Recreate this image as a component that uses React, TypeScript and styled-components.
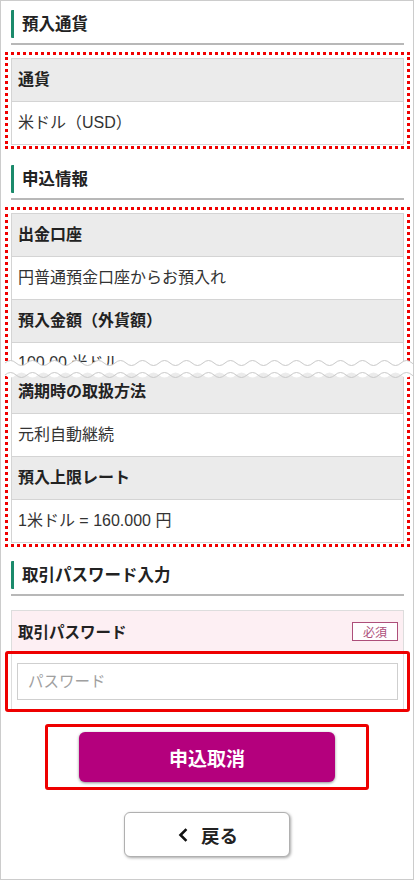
import styled, { createGlobalStyle } from "styled-components";

const GlobalStyle = createGlobalStyle`
  html, body {
    margin: 0;
    padding: 0;
    background: #ffffff;
  }
  body {
    font-family: "Liberation Sans", "Noto Sans CJK JP", sans-serif;
    color: #222;
  }
  * {
    box-sizing: border-box;
  }
`;

const Frame = styled.div`
  position: relative;
  width: 414px;
  height: 880px;
  border: 1px solid #cccccc;
  padding: 9px 9px 0 10px;
  overflow: hidden;
  background: #fff;
`;

const Heading = styled.div<{ $gap?: number }>`
  margin-top: ${(p) => p.$gap ?? 0}px;
  padding-bottom: 5px;
  border-bottom: 2px solid #b8b8b8;
  margin-bottom: 7px;
`;

const HeadingTitle = styled.h2`
  margin: 0;
  border-left: 3px solid #1b8a6b;
  border-radius: 1px;
  padding-left: 8px;
  height: 28px;
  line-height: 28px;
  font-size: 16.5px;
  font-weight: 700;
  color: #222;
`;

const DottedBox = styled.div`
  margin: 0 -6px;
  border: 3px dotted #f00000;
  padding: 3px 3px 1px 3px;
`;

const Table = styled.div`
  border: 1px solid #d4d4d4;
  border-bottom: none;
  position: relative;
`;

const Row = styled.div<{ $head?: boolean; $height?: number }>`
  height: ${(p) => p.$height ?? 43}px;
  line-height: ${(p) => (p.$height ? 40 : 42)}px;
  padding: 0 6px;
  border-bottom: 1px solid #d4d4d4;
  background: ${(p) => (p.$head ? "#ebebeb" : "#ffffff")};
  font-size: 16px;
  font-weight: ${(p) => (p.$head ? 700 : 400)};
  color: ${(p) => (p.$head ? "#222" : "#333")};
  overflow: hidden;
  white-space: nowrap;
`;

const CutMark = styled.div`
  position: relative;
  height: 0;
  z-index: 2;

  svg {
    position: absolute;
    left: -7px;
    top: -13px;
  }
`;

const PassHeader = styled.div`
  margin-top: 14px;
  height: 41px;
  background: #fdeff3;
  border: 1px solid #dddddd;
  border-bottom: none;
  padding: 0 5px 0 6px;
  display: flex;
  align-items: center;
  justify-content: space-between;
  font-size: 15.5px;
  font-weight: 700;
  color: #222;
`;

const Badge = styled.span`
  display: inline-flex;
  align-items: center;
  justify-content: center;
  width: 46px;
  height: 19px;
  border: 1px solid #ad4f7a;
  color: #ad4f7a;
  font-size: 12px;
  font-weight: 400;
  background: #fff;
`;

const RedFrame = styled.div`
  border: 3px solid #ee0000;
  border-radius: 3px;
`;

const InputFrame = styled(RedFrame)`
  margin: 0 -6px;
`;

const InputRow = styled.div`
  margin: 0 3px;
  border-left: 1px solid #dddddd;
  border-right: 1px solid #dddddd;
  padding: 9px 5px;
`;

const PasswordInput = styled.input`
  display: block;
  width: 100%;
  height: 37px;
  border: 1px solid #cfcfcf;
  padding: 0 10px;
  font-family: inherit;
  font-size: 15.5px;
  color: #333;
  outline: none;

  &::placeholder {
    color: #a0a0a0;
  }
`;

const Actions = styled.div`
  display: flex;
  flex-direction: column;
  align-items: center;
  padding-right: 1px;
`;

const ButtonFrame = styled(RedFrame)`
  margin-top: 12px;
  width: 324px;
  padding: 5px 31px;
`;

const PrimaryButton = styled.button`
  display: block;
  width: 100%;
  height: 50px;
  border: none;
  border-radius: 6px;
  background: #b4007d;
  color: #fff;
  font-family: inherit;
  font-size: 19px;
  font-weight: 700;
  box-shadow: 0 1px 3px rgba(0, 0, 0, 0.45);
  cursor: pointer;
`;

const BackButton = styled.button`
  margin-top: 22px;
  width: 166px;
  height: 45px;
  border: 1px solid #b0b0b0;
  border-radius: 6px;
  background: #fff;
  box-shadow: 1px 1px 3px rgba(0, 0, 0, 0.35);
  display: flex;
  align-items: center;
  justify-content: center;
  gap: 13px;
  padding-right: 4px;
  font-family: inherit;
  font-size: 18.5px;
  font-weight: 700;
  color: #222;
  cursor: pointer;
`;

function wavePath(width: number, y: number, amp: number) {
  const half = 11;
  let d = `M0 ${y}`;
  let up = true;
  for (let x = 0; x < width; x += half) {
    d += ` Q${x + half / 2} ${y + (up ? -2 * amp : 2 * amp)} ${x + half} ${y}`;
    up = !up;
  }
  return d;
}

function Wave() {
  const w = 412;
  const top = wavePath(w, 5, 2.5);
  const bottom = wavePath(w, 17, 2.5);
  const steps = Math.ceil(w / 11);
  // closed band between the two lines
  let back = "";
  let up = steps % 2 === 1;
  for (let i = steps; i > 0; i--) {
    const x = i * 11;
    back += ` Q${x - 5.5} ${17 + (up ? 5 : -5)} ${x - 11} 17`;
    up = !up;
  }
  const band = `${top} L${steps * 11} 17${back} Z`;
  return (
    <svg width={w} height={23} viewBox={`0 0 ${w} 23`}>
      <path d={band} fill="#fff" />
      <path d={top} fill="none" stroke="#c9c9c9" strokeWidth="1" />
      <path d={bottom} fill="none" stroke="#c9c9c9" strokeWidth="1" />
    </svg>
  );
}

export default function App() {
  return (
    <>
      <GlobalStyle />
      <Frame>
        <Heading>
          <HeadingTitle>預入通貨</HeadingTitle>
        </Heading>
        <DottedBox>
          <Table>
            <Row $head>通貨</Row>
            <Row>米ドル（USD）</Row>
          </Table>
        </DottedBox>

        <Heading $gap={16}>
          <HeadingTitle>申込情報</HeadingTitle>
        </Heading>
        <DottedBox>
          <Table>
            <Row $head>出金口座</Row>
            <Row>円普通預金口座からお預入れ</Row>
            <Row $head>預入金額（外貨額）</Row>
            <Row $height={28}>100.00 米ドル</Row>
            <CutMark>
              <Wave />
            </CutMark>
            <Row $head>満期時の取扱方法</Row>
            <Row>元利自動継続</Row>
            <Row $head>預入上限レート</Row>
            <Row>1米ドル = 160.000 円</Row>
          </Table>
        </DottedBox>

        <Heading $gap={14}>
          <HeadingTitle>取引パスワード入力</HeadingTitle>
        </Heading>
        <PassHeader>
          取引パスワード
          <Badge>必須</Badge>
        </PassHeader>
        <InputFrame>
          <InputRow>
            <PasswordInput type="password" placeholder="パスワード" />
          </InputRow>
        </InputFrame>

        <Actions>
          <ButtonFrame>
            <PrimaryButton>申込取消</PrimaryButton>
          </ButtonFrame>
          <BackButton>
            <svg width="10" height="14" viewBox="0 0 10 14">
              <polyline
                points="7.5,2 2.5,7 7.5,12"
                fill="none"
                stroke="#111"
                strokeWidth="2.6"
                strokeLinecap="square"
              />
            </svg>
            戻る
          </BackButton>
        </Actions>
      </Frame>
    </>
  );
}
